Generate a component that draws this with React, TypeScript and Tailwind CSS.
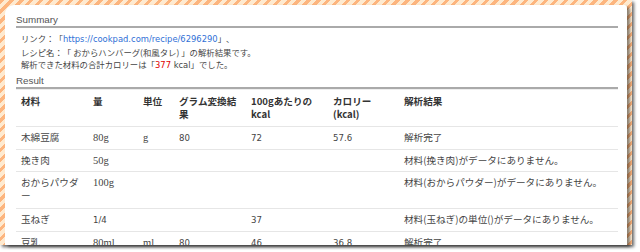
const jp = "font-['Noto_Sans_CJK_JP',sans-serif] [text-spacing-trim:space-all]";

export default function App() {
  const th = "px-[5px] pt-[5px] pb-[5px] leading-[13px] text-left align-top font-bold text-[#333]";
  const td = "px-[5px] pt-[4px] pb-[4px] leading-[13px] align-top border-t border-[#e6e6e6]";
  const num = "font-['DejaVu_Sans',sans-serif] text-[8.6px]";
  const serif = "font-['Liberation_Serif',serif] text-[10.5px]";
  const latin = "font-['DejaVu_Sans',sans-serif]";

  return (
    <div className="w-[640px] h-[252px] bg-white overflow-hidden">
      {/* striped frame */}
      <div className="w-[632px] h-[245px] pt-[5px] pl-[5px] pr-[5px] bg-[repeating-linear-gradient(135deg,#fdb57e_0px,#fdb57e_3px,#feead0_3px,#feead0_7px)] shadow-[2px_2px_3px_rgba(0,0,0,0.6)]">
        <div className="h-full bg-white rounded-tl-[9px] rounded-tr-[3px] overflow-hidden pl-[11px] pr-[9px] pt-[8px] shadow-[3px_2px_3px_rgba(0,0,0,0.45)] text-[#444]">
          {/* Summary */}
          <h2 className="font-['Liberation_Sans',sans-serif] text-[9.8px] leading-[13px] text-[#555] border-b-2 border-[#aaa]">
            Summary
          </h2>
          <div className={`mt-[4px] pl-[5px] text-[8.4px] leading-[12.5px] ${jp}`}>
            <p>
              リンク：「<span className={`text-[#2f6fd6] ${latin}`}>https://cookpad.com/recipe/6296290</span>」、
            </p>
            <p>レシピ名：「 おからハンバーグ(和風タレ) 」の解析結果です。</p>
            <p>
              解析できた材料の合計カロリーは「<span className={`text-[#e00000] ${latin}`}>377</span>
              <span className={latin}> kcal</span>」でした。
            </p>
          </div>

          {/* Result */}
          <h2 className="mt-[2px] font-['Liberation_Sans',sans-serif] text-[9.8px] leading-[13px] text-[#555] border-b-2 border-[#aaa]">
            Result
          </h2>
          <table className={`w-full table-fixed border-collapse border-t border-[#eee] text-[9.6px] ${jp}`}>
            <colgroup>
              <col className="w-[72px]" />
              <col className="w-[50px]" />
              <col className="w-[36px]" />
              <col className="w-[72px]" />
              <col className="w-[82px]" />
              <col className="w-[71px]" />
              <col />
            </colgroup>
            <thead>
              <tr>
                <th className={th}>材料</th>
                <th className={th}>量</th>
                <th className={th}>単位</th>
                <th className={th}>
                  グラム変換結
                  <br />果
                </th>
                <th className={th}>
                  100gあたりの
                  <br />kcal
                </th>
                <th className={th}>
                  カロリー
                  <br />(kcal)
                </th>
                <th className={th}>解析結果</th>
              </tr>
            </thead>
            <tbody>
              <tr>
                <td className={td}>木綿豆腐</td>
                <td className={td}><span className={serif}>80g</span></td>
                <td className={td}><span className={serif}>g</span></td>
                <td className={td}><span className={num}>80</span></td>
                <td className={td}><span className={num}>72</span></td>
                <td className={td}><span className={num}>57.6</span></td>
                <td className={td}>解析完了</td>
              </tr>
              <tr>
                <td className={td}>挽き肉</td>
                <td className={td}><span className={serif}>50g</span></td>
                <td className={td}></td>
                <td className={td}></td>
                <td className={td}></td>
                <td className={td}></td>
                <td className={td}>材料(挽き肉)がデータにありません。</td>
              </tr>
              <tr>
                <td className="px-[5px] pt-[4px] pb-[6px] leading-[13px] align-top border-t border-[#e6e6e6]">
                  おからパウダ
                  <br />ー
                </td>
                <td className={td}><span className={serif}>100g</span></td>
                <td className={td}></td>
                <td className={td}></td>
                <td className={td}></td>
                <td className={td}></td>
                <td className={td}>材料(おからパウダー)がデータにありません。</td>
              </tr>
              <tr>
                <td className={td}>玉ねぎ</td>
                <td className={td}><span className={num}>1/4</span></td>
                <td className={td}></td>
                <td className={td}></td>
                <td className={td}><span className={num}>37</span></td>
                <td className={td}></td>
                <td className={td}>材料(玉ねぎ)の単位()がデータにありません。</td>
              </tr>
              <tr>
                <td className={td}>豆乳</td>
                <td className={td}><span className={serif}>80ml</span></td>
                <td className={td}><span className={serif}>ml</span></td>
                <td className={td}><span className={num}>80</span></td>
                <td className={td}><span className={num}>46</span></td>
                <td className={td}><span className={num}>36.8</span></td>
                <td className={td}>解析完了</td>
              </tr>
            </tbody>
          </table>
        </div>
      </div>
    </div>
  );
}
